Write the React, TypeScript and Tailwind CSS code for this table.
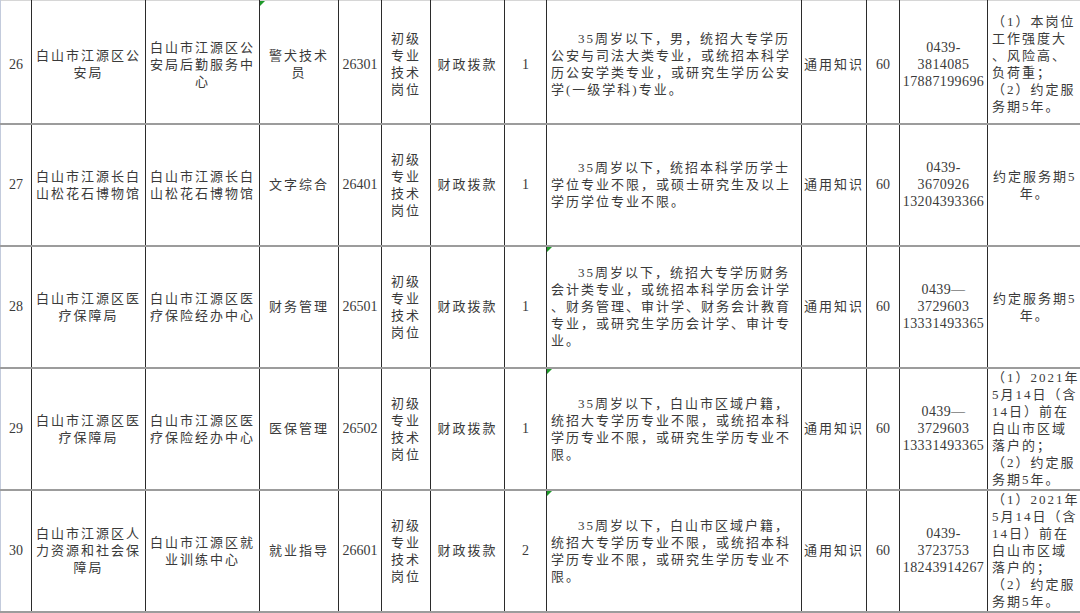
import React from "react";

type Row = {
  no: string;
  unit: string[];
  dept: string[];
  post: string[];
  code: string;
  count: string;
  req: string[];
  phone: string[];
  notes: string[];
  notesCenter?: boolean;
  postMark?: boolean;
  reqMark?: boolean;
};

const rows: Row[] = [
  {
    no: "26",
    unit: ["白山市江源区公", "安局"],
    dept: ["白山市江源区公", "安局后勤服务中", "心"],
    post: ["警犬技术", "员"],
    code: "26301",
    count: "1",
    req: [
      "35周岁以下，男，统招大专学历",
      "公安与司法大类专业，或统招本科学",
      "历公安学类专业，或研究生学历公安",
      "学(一级学科)专业。",
    ],
    phone: ["0439-", "3814085", "17887199696"],
    notes: ["（1）本岗位", "工作强度大", "、风险高、", "负荷重；", "（2）约定服", "务期5年。"],
    postMark: true,
  },
  {
    no: "27",
    unit: ["白山市江源长白", "山松花石博物馆"],
    dept: ["白山市江源长白", "山松花石博物馆"],
    post: ["文字综合"],
    code: "26401",
    count: "1",
    req: [
      "35周岁以下，统招本科学历学士",
      "学位专业不限，或硕士研究生及以上",
      "学历学位专业不限。",
    ],
    phone: ["0439-", "3670926", "13204393366"],
    notes: ["约定服务期5", "年。"],
    notesCenter: true,
  },
  {
    no: "28",
    unit: ["白山市江源区医", "疗保障局"],
    dept: ["白山市江源区医", "疗保险经办中心"],
    post: ["财务管理"],
    code: "26501",
    count: "1",
    req: [
      "35周岁以下，统招大专学历财务",
      "会计类专业，或统招本科学历会计学",
      "、财务管理、审计学、财务会计教育",
      "专业，或研究生学历会计学、审计专",
      "业。",
    ],
    phone: ["0439—", "3729603", "13331493365"],
    notes: ["约定服务期5", "年。"],
    notesCenter: true,
    reqMark: true,
  },
  {
    no: "29",
    unit: ["白山市江源区医", "疗保障局"],
    dept: ["白山市江源区医", "疗保险经办中心"],
    post: ["医保管理"],
    code: "26502",
    count: "1",
    req: [
      "35周岁以下，白山市区域户籍，",
      "统招大专学历专业不限，或统招本科",
      "学历专业不限，或研究生学历专业不",
      "限。",
    ],
    phone: ["0439—", "3729603", "13331493365"],
    notes: ["（1）2021年", "5月14日（含", "14日）前在", "白山市区域", "落户的；", "（2）约定服", "务期5年。"],
    reqMark: true,
  },
  {
    no: "30",
    unit: ["白山市江源区人", "力资源和社会保", "障局"],
    dept: ["白山市江源区就", "业训练中心"],
    post: ["就业指导"],
    code: "26601",
    count: "2",
    req: [
      "35周岁以下，白山市区域户籍，",
      "统招大专学历专业不限，或统招本科",
      "学历专业不限，或研究生学历专业不",
      "限。",
    ],
    phone: ["0439-", "3723753", "18243914267"],
    notes: ["（1）2021年", "5月14日（含", "14日）前在", "白山市区域", "落户的；", "（2）约定服", "务期5年。"],
    reqMark: true,
  },
];

const cell =
  "relative p-0 align-middle text-center border-l border-l-[#2b2b2b] border-b-2 border-b-[#9c9c9c]";
const cjk = "text-[13px] tracking-[2px] leading-[17px]";
const num = "text-[14px] leading-[17px]";

const Lines = ({ lines }: { lines: string[] }) => (
  <>
    {lines.map((l, i) => (
      <div key={i} className="whitespace-nowrap">
        {l}
      </div>
    ))}
  </>
);

const Mark = () => (
  <span className="absolute top-0 left-0 w-0 h-0 border-t-[5px] border-t-[#1f9a2a] border-r-[5px] border-r-transparent" />
);

export default function App() {
  return (
    <div className="w-[1080px] h-[613px] overflow-hidden bg-white text-[#3a3a3a] font-['Liberation_Serif','Noto_Sans_CJK_SC',serif]">
      <table className="table-fixed border-collapse w-[1081px]">
        <colgroup>
          <col className="w-[31px]" />
          <col className="w-[114px]" />
          <col className="w-[114px]" />
          <col className="w-[79px]" />
          <col className="w-[43px]" />
          <col className="w-[49px]" />
          <col className="w-[74px]" />
          <col className="w-[42px]" />
          <col className="w-[255px]" />
          <col className="w-[65px]" />
          <col className="w-[33px]" />
          <col className="w-[88px]" />
          <col className="w-[94px]" />
        </colgroup>
        <tbody>
          {rows.map((r, idx) => {
            const top = idx === 0 ? "pt-[5px]" : "";
            return (
              <tr key={r.no} className={idx === 0 ? "h-[123px] border-t border-t-[#d6d6d6]" : "h-[122px]"}>
                <td className={`${cell} ${num} ${top} border-l-[#c3cbdc]`}>{r.no}</td>
                <td className={`${cell} ${cjk} ${top}`}>
                  <Lines lines={r.unit} />
                </td>
                <td className={`${cell} ${cjk} ${top}`}>
                  <Lines lines={r.dept} />
                </td>
                <td className={`${cell} ${cjk} ${top}`}>
                  {r.postMark && <Mark />}
                  <Lines lines={r.post} />
                </td>
                <td className={`${cell} ${num} ${top}`}>{r.code}</td>
                <td className={`${cell} ${cjk} ${top} tracking-[1px]`}>
                  <Lines lines={["初级", "专业", "技术", "岗位"]} />
                </td>
                <td className={`${cell} ${cjk} ${top}`}>财政拨款</td>
                <td className={`${cell} ${num} ${top}`}>{r.count}</td>
                <td className={`${cell} ${cjk} ${top} text-left pl-1`}>
                  {r.reqMark && <Mark />}
                  {r.req.map((l, i) => (
                    <div key={i} className={`whitespace-nowrap ${i === 0 ? "pl-[27px]" : ""}`}>
                      {l}
                    </div>
                  ))}
                </td>
                <td className={`${cell} ${cjk} ${top}`}>通用知识</td>
                <td className={`${cell} ${num} ${top}`}>60</td>
                <td className={`${cell} ${num} ${top} tracking-[0.4px]`}>
                  <Lines lines={r.phone} />
                </td>
                <td className={`${cell} ${cjk} ${top} ${r.notesCenter ? "text-center" : "text-left pl-1"}`}>
                  <Lines lines={r.notes} />
                </td>
              </tr>
            );
          })}
        </tbody>
      </table>
    </div>
  );
}
